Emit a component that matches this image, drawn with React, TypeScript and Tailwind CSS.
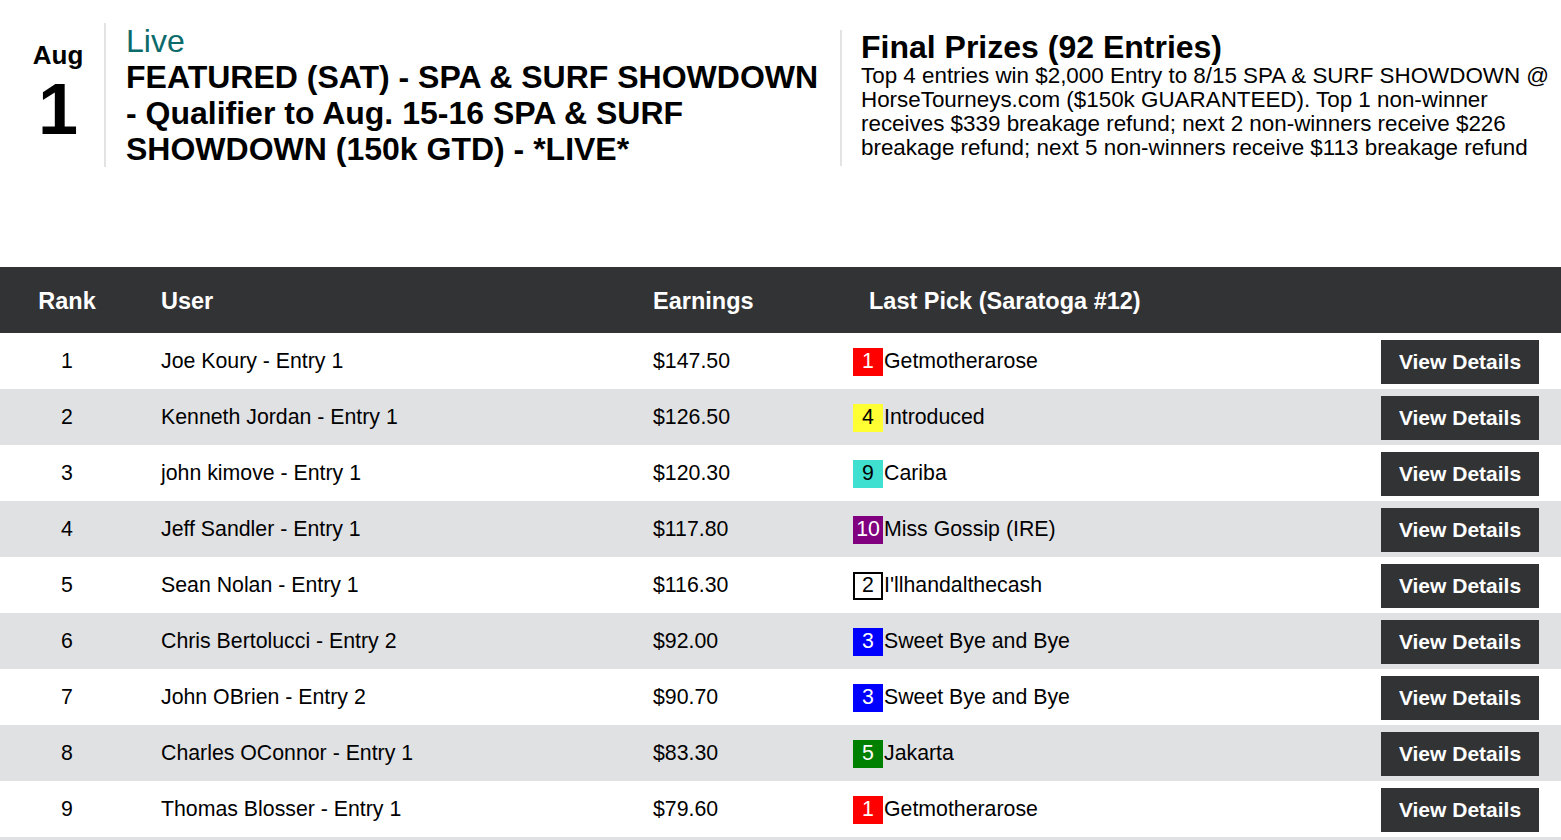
import React from 'react';

type Pick = { num: string; name: string; bg: string; text: string; border?: boolean };

type Row = { rank: number; user: string; earnings: string; pick: Pick };

const red: Omit<Pick, 'name'> = { num: '1', bg: 'bg-[#ff0000]', text: 'text-white' };
const blue: Omit<Pick, 'name'> = { num: '3', bg: 'bg-[#0000ff]', text: 'text-white' };

const rows: Row[] = [
  { rank: 1, user: 'Joe Koury - Entry 1', earnings: '$147.50', pick: { ...red, name: 'Getmotherarose' } },
  { rank: 2, user: 'Kenneth Jordan - Entry 1', earnings: '$126.50', pick: { num: '4', name: 'Introduced', bg: 'bg-[#ffff33]', text: 'text-black' } },
  { rank: 3, user: 'john kimove - Entry 1', earnings: '$120.30', pick: { num: '9', name: 'Cariba', bg: 'bg-[#40e0d0]', text: 'text-black' } },
  { rank: 4, user: 'Jeff Sandler - Entry 1', earnings: '$117.80', pick: { num: '10', name: 'Miss Gossip (IRE)', bg: 'bg-[#800080]', text: 'text-white' } },
  { rank: 5, user: 'Sean Nolan - Entry 1', earnings: '$116.30', pick: { num: '2', name: "I'llhandalthecash", bg: 'bg-white', text: 'text-black', border: true } },
  { rank: 6, user: 'Chris Bertolucci - Entry 2', earnings: '$92.00', pick: { ...blue, name: 'Sweet Bye and Bye' } },
  { rank: 7, user: 'John OBrien - Entry 2', earnings: '$90.70', pick: { ...blue, name: 'Sweet Bye and Bye' } },
  { rank: 8, user: 'Charles OConnor - Entry 1', earnings: '$83.30', pick: { num: '5', name: 'Jakarta', bg: 'bg-[#008000]', text: 'text-white' } },
  { rank: 9, user: 'Thomas Blosser - Entry 1', earnings: '$79.60', pick: { ...red, name: 'Getmotherarose' } },
];

const cols = 'grid grid-cols-[134px_492px_216px_1fr_auto] items-center';

const Badge: React.FC<{ pick: Pick }> = ({ pick }) => (
  <span
    className={`w-[30px] h-[28px] flex items-center justify-center shrink-0 ${pick.bg} ${pick.text} ${
      pick.border ? 'border-2 border-black' : ''
    }`}
  >
    {pick.num}
  </span>
);

export default function App() {
  return (
    <div className="w-[1561px] h-[840px] overflow-hidden bg-white text-black font-['Liberation_Sans',Arial,sans-serif]">
      {/* contest header */}
      <div className="flex items-start pt-[23px] h-[267px]">
        <div className="flex w-[840px] shrink-0">
          <div className="w-[106px] pl-[12px] border-r-2 border-[#e3e3e3] flex flex-col items-center pt-[17px]">
            <span className="text-[26px] font-bold leading-[30px]">Aug</span>
            <span className="text-[72px] font-bold leading-[60px] mt-[9px]">1</span>
          </div>
          <div className="pl-[20px] pr-[10px] flex-1">
            <div className="text-[32px] leading-[36px] text-[#0b6b6b]">Live</div>
            <div className="text-[32px] leading-[36px] font-bold">
              FEATURED (SAT) - SPA &amp; SURF SHOWDOWN - Qualifier to Aug. 15-16 SPA &amp; SURF SHOWDOWN (150k GTD) - *LIVE*
            </div>
          </div>
        </div>
        <div className="mt-[7px] border-l-2 border-[#e3e3e3] pl-[19px] pr-[6px] flex-1">
          <div className="text-[32px] leading-[34px] font-bold">Final Prizes (92 Entries)</div>
          <p className="text-[22.4px] leading-[24px] pb-[6px]">
            Top 4 entries win $2,000 Entry to 8/15 SPA &amp; SURF SHOWDOWN @ HorseTourneys.com ($150k GUARANTEED). Top 1
            non-winner receives $339 breakage refund; next 2 non-winners receive $226 breakage refund; next 5 non-winners
            receive $113 breakage refund
          </p>
        </div>
      </div>

      {/* leaderboard */}
      <div className={`${cols} h-[66px] pt-[3px] bg-[#323335] text-white font-bold text-[23.5px]`}>
        <div className="text-center">Rank</div>
        <div className="pl-[27px]">User</div>
        <div className="pl-[27px]">Earnings</div>
        <div className="pl-[27px]">Last Pick (Saratoga #12)</div>
        <div />
      </div>
      {rows.map((r, i) => (
        <div
          key={r.rank}
          className={`${cols} h-[56px] pt-[1px] text-[21.3px] ${i % 2 === 1 ? 'bg-[#e0e1e3]' : 'bg-white'}`}
        >
          <div className="text-center">{r.rank}</div>
          <div className="pl-[27px]">{r.user}</div>
          <div className="pl-[27px]">{r.earnings}</div>
          <div className="pl-[11px] flex items-center gap-[1px]">
            <Badge pick={r.pick} />
            <span>{r.pick.name}</span>
          </div>
          <div className="pr-[22px]">
            <button className="w-[158px] h-[44px] bg-[#323335] text-white font-bold text-[21px]">View Details</button>
          </div>
        </div>
      ))}
      <div className="h-[56px] bg-[#e0e1e3]" />
    </div>
  );
}
